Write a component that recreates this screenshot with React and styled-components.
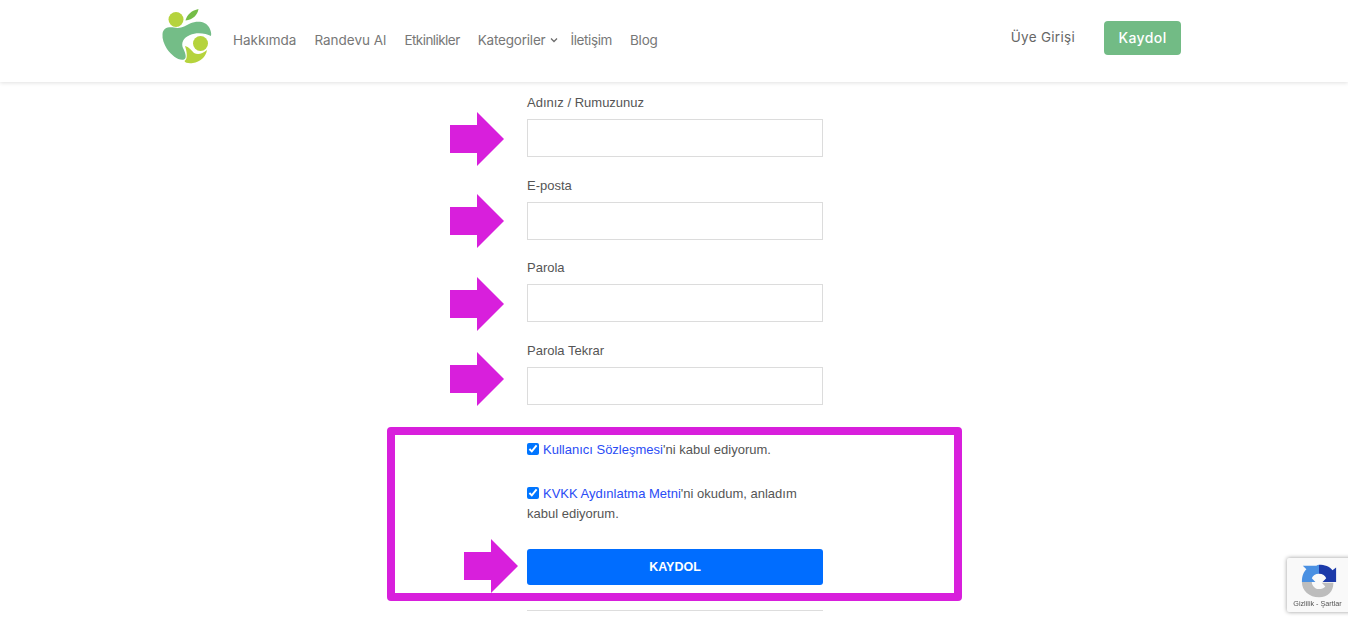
import styled, { createGlobalStyle } from 'styled-components';

const GlobalStyle = createGlobalStyle`
  html, body {
    margin: 0;
    height: 630px;
    overflow: hidden;
    background: #fff;
    font-family: "Liberation Sans", Arial, sans-serif;
  }
  * { box-sizing: border-box; }
`;

const Header = styled.header`
  height: 82px;
  padding: 0 167px 0 162px;
  display: flex;
  align-items: center;
  background: #fff;
  box-shadow: 0 1px 4px rgba(0, 0, 0, 0.12);
`;

const Logo = styled.svg`
  width: 50px;
  height: 55px;
  align-self: flex-start;
  margin-top: 9px;
  margin-right: 21px;
  flex-shrink: 0;
`;

const Nav = styled.nav`
  display: flex;
  align-items: center;
  gap: 18px;
  flex: 1;
  margin-top: -2px;
`;

const NavLink = styled.a`
  display: flex;
  align-items: center;
  gap: 5px;
  margin-right: ${(p) => p.$after || 0}px;
  font-family: "Inter", sans-serif;
  font-size: 13.5px;
  letter-spacing: ${(p) => p.$spacing || 0}px;
  color: #777;
  white-space: nowrap;
`;

const Login = styled.a`
  font-family: "Inter", sans-serif;
  font-size: 13.5px;
  letter-spacing: 0.3px;
  color: #666;
  margin-right: 29px;
  margin-top: -8px;
`;

const SignUp = styled.a`
  width: 77px;
  height: 34px;
  margin-top: -7px;
  display: flex;
  align-items: center;
  justify-content: center;
  background: #72bb85;
  border-radius: 4px;
  color: #fff;
  font-family: "Inter", sans-serif;
  font-size: 14px;
  font-weight: 500;
  letter-spacing: 0.4px;
`;

const Page = styled.main`
  padding: 10px 0 0 2px;
`;

const Form = styled.form`
  width: 296px;
  margin: 0 auto;
  display: flex;
  flex-direction: column;
`;

const Fields = styled.div`
  display: flex;
  flex-direction: column;
  gap: 17.5px;
`;

const Field = styled.div`
  position: relative;
  display: flex;
  flex-direction: column;
  gap: 6px;
`;

const Label = styled.label`
  font-size: 13px;
  line-height: 21px;
  color: #555;
`;

const Input = styled.input`
  height: 38px;
  width: 100%;
  border: 1px solid #dcdcdc;
  background: #fff;
  outline: none;
`;

const Arrow = styled.svg`
  position: absolute;
  width: 54px;
  height: 54px;
  left: ${(p) => p.$left}px;
  bottom: ${(p) => p.$bottom}px;
  fill: #d81fdc;
`;

const Consent = styled.section`
  position: relative;
  margin-top: 35.5px;
  display: flex;
  flex-direction: column;
`;

const Highlight = styled.div`
  position: absolute;
  top: -13.5px;
  bottom: -16px;
  left: -140px;
  right: -139px;
  border: 8px solid #d81fdc;
  border-radius: 4px;
  pointer-events: none;
`;

const Terms = styled.p`
  margin: 0 0 ${(p) => p.$after}px;
  font-size: 13px;
  line-height: 20px;
  color: #555;
`;

const Check = styled.input`
  width: 12px;
  height: 12px;
  margin: 0 4px 0 0;
  vertical-align: -1px;
  accent-color: #0075ff;
`;

const TermLink = styled.a`
  color: #2a4cf5;
`;

const Submit = styled.button`
  height: 36px;
  width: 100%;
  border: 0;
  border-radius: 3px;
  background: #006dff;
  color: #fff;
  font-family: "Liberation Sans", Arial, sans-serif;
  font-size: 12.5px;
  font-weight: 700;
`;

const Divider = styled.hr`
  margin: 25px 0 0;
  border: 0;
  border-top: 1px solid #ddd;
`;

const Recaptcha = styled.div`
  position: fixed;
  left: 1287px;
  top: 558px;
  width: 70px;
  height: 54px;
  background: #f9f9f9;
  border-radius: 2px;
  box-shadow: 0 0 4px rgba(0, 0, 0, 0.4);
`;

const BadgeInner = styled.div`
  width: 61px;
  display: flex;
  flex-direction: column;
  align-items: center;
  padding-top: 5px;
`;

const BadgeIcon = styled.svg`
  width: 36px;
  height: 36px;
  margin-left: 3px;
`;

const BadgeText = styled.span`
  font-size: 7.2px;
  line-height: 9px;
  color: #555;
  white-space: nowrap;
`;

const ArrowShape = ({ left, bottom }) => (
  <Arrow $left={left} $bottom={bottom} viewBox="0 0 54 54">
    <polygon points="0,13 27,13 27,0 54,27 27,54 27,41 0,41" />
  </Arrow>
);

const navItems = [
  { label: 'Hakkımda', spacing: 0 },
  { label: 'Randevu Al', spacing: 0 },
  { label: 'Etkinlikler', spacing: -0.55 },
];

const fields = [
  { label: 'Adınız / Rumuzunuz', type: 'text', arrow: -9 },
  { label: 'E-posta', type: 'text', arrow: -8 },
  { label: 'Parola', type: 'password', arrow: -9 },
  { label: 'Parola Tekrar', type: 'password', arrow: -1 },
];

export default function App() {
  return (
    <>
      <GlobalStyle />
      <Header>
        <Logo viewBox="12 9 50 55">
          <path
            fill="#74bd87"
            d="M12.5 34C13 28 18 26.5 24 27.5C31 29 35 26 40 23.5C47 20.5 56 21 59.5 28C61 31 61.5 33.5 61 36C56 33 46 32 40 35C33 38 31 43 33 48C35 52 37.5 58 34 59.5C29 61 22 56 17 49C14 44 12 39 12.5 34Z"
          />
          <circle fill="#b5d33d" cx="26" cy="19.5" r="7.5" />
          <path fill="#74bd47" d="M35.5 20.5C37 14 42 10.5 48.5 9C47.5 15 43 19.5 35.5 20.5Z" />
          <circle fill="#b5d33d" cx="50.5" cy="43.5" r="7.5" />
          <path
            fill="#b5d33d"
            d="M35 46C39 47 41 50 44 53C48 55 52 54 57 50C56 57 50 62 43 63C39 63.5 35 63 34.5 61C38 59 37 52 35 46Z"
          />
        </Logo>
        <Nav>
          {navItems.map((item) => (
            <NavLink key={item.label} $spacing={item.spacing}>{item.label}</NavLink>
          ))}
          <NavLink $spacing={-0.2} $after={-6}>
            Kategoriler
            <svg width="8" height="6" viewBox="0 0 8 6" fill="none" stroke="#6d6d6d" strokeWidth="1.3">
              <path d="M1 1.5L4 4.5L7 1.5" />
            </svg>
          </NavLink>
          <NavLink $spacing={-0.4}>İletişim</NavLink>
          <NavLink $spacing={-0.2}>Blog</NavLink>
        </Nav>
        <Login>Üye Girişi</Login>
        <SignUp>Kaydol</SignUp>
      </Header>
      <Page>
        <Form>
          <Fields>
            {fields.map((field) => (
              <Field key={field.label}>
                <Label>{field.label}</Label>
                <Input type={field.type} />
                <ArrowShape left={-77} bottom={field.arrow} />
              </Field>
            ))}
          </Fields>
          <Consent>
            <Highlight />
            <Terms $after={24}>
              <Check type="checkbox" defaultChecked readOnly />
              <TermLink>Kullanıcı Sözleşmesi</TermLink>'ni kabul ediyorum.
            </Terms>
            <Terms $after={24.5}>
              <Check type="checkbox" defaultChecked readOnly />
              <TermLink>KVKK Aydınlatma Metni</TermLink>'ni okudum, anladım kabul ediyorum.
            </Terms>
            <Field>
              <Submit type="button">KAYDOL</Submit>
              <ArrowShape left={-63} bottom={-8} />
            </Field>
          </Consent>
          <Divider />
        </Form>
      </Page>
      <Recaptcha>
        <BadgeInner>
          <BadgeIcon viewBox="0 0 40 40">
            <path fill="#1c3aa9" d="M20 2C26 2 32 4 35 8L39 5V21H24L28 17C27 14 24 12 20 12Z" />
            <path fill="#4a90e2" d="M20 2V12C16 12 13 14 12 17L16 21H1C1 14 3 10 6 7L2 3H17C18 2.5 19 2 20 2Z" />
            <path fill="#bdbdbd" d="M1 21H12C12 25.5 16 29 20 29C23 29 25 28 27 26L23 22H36C36 32 30 38 20 38C9.5 38 1 31 1 21Z" />
          </BadgeIcon>
          <BadgeText>Gizlilik - Şartlar</BadgeText>
        </BadgeInner>
      </Recaptcha>
    </>
  );
}
